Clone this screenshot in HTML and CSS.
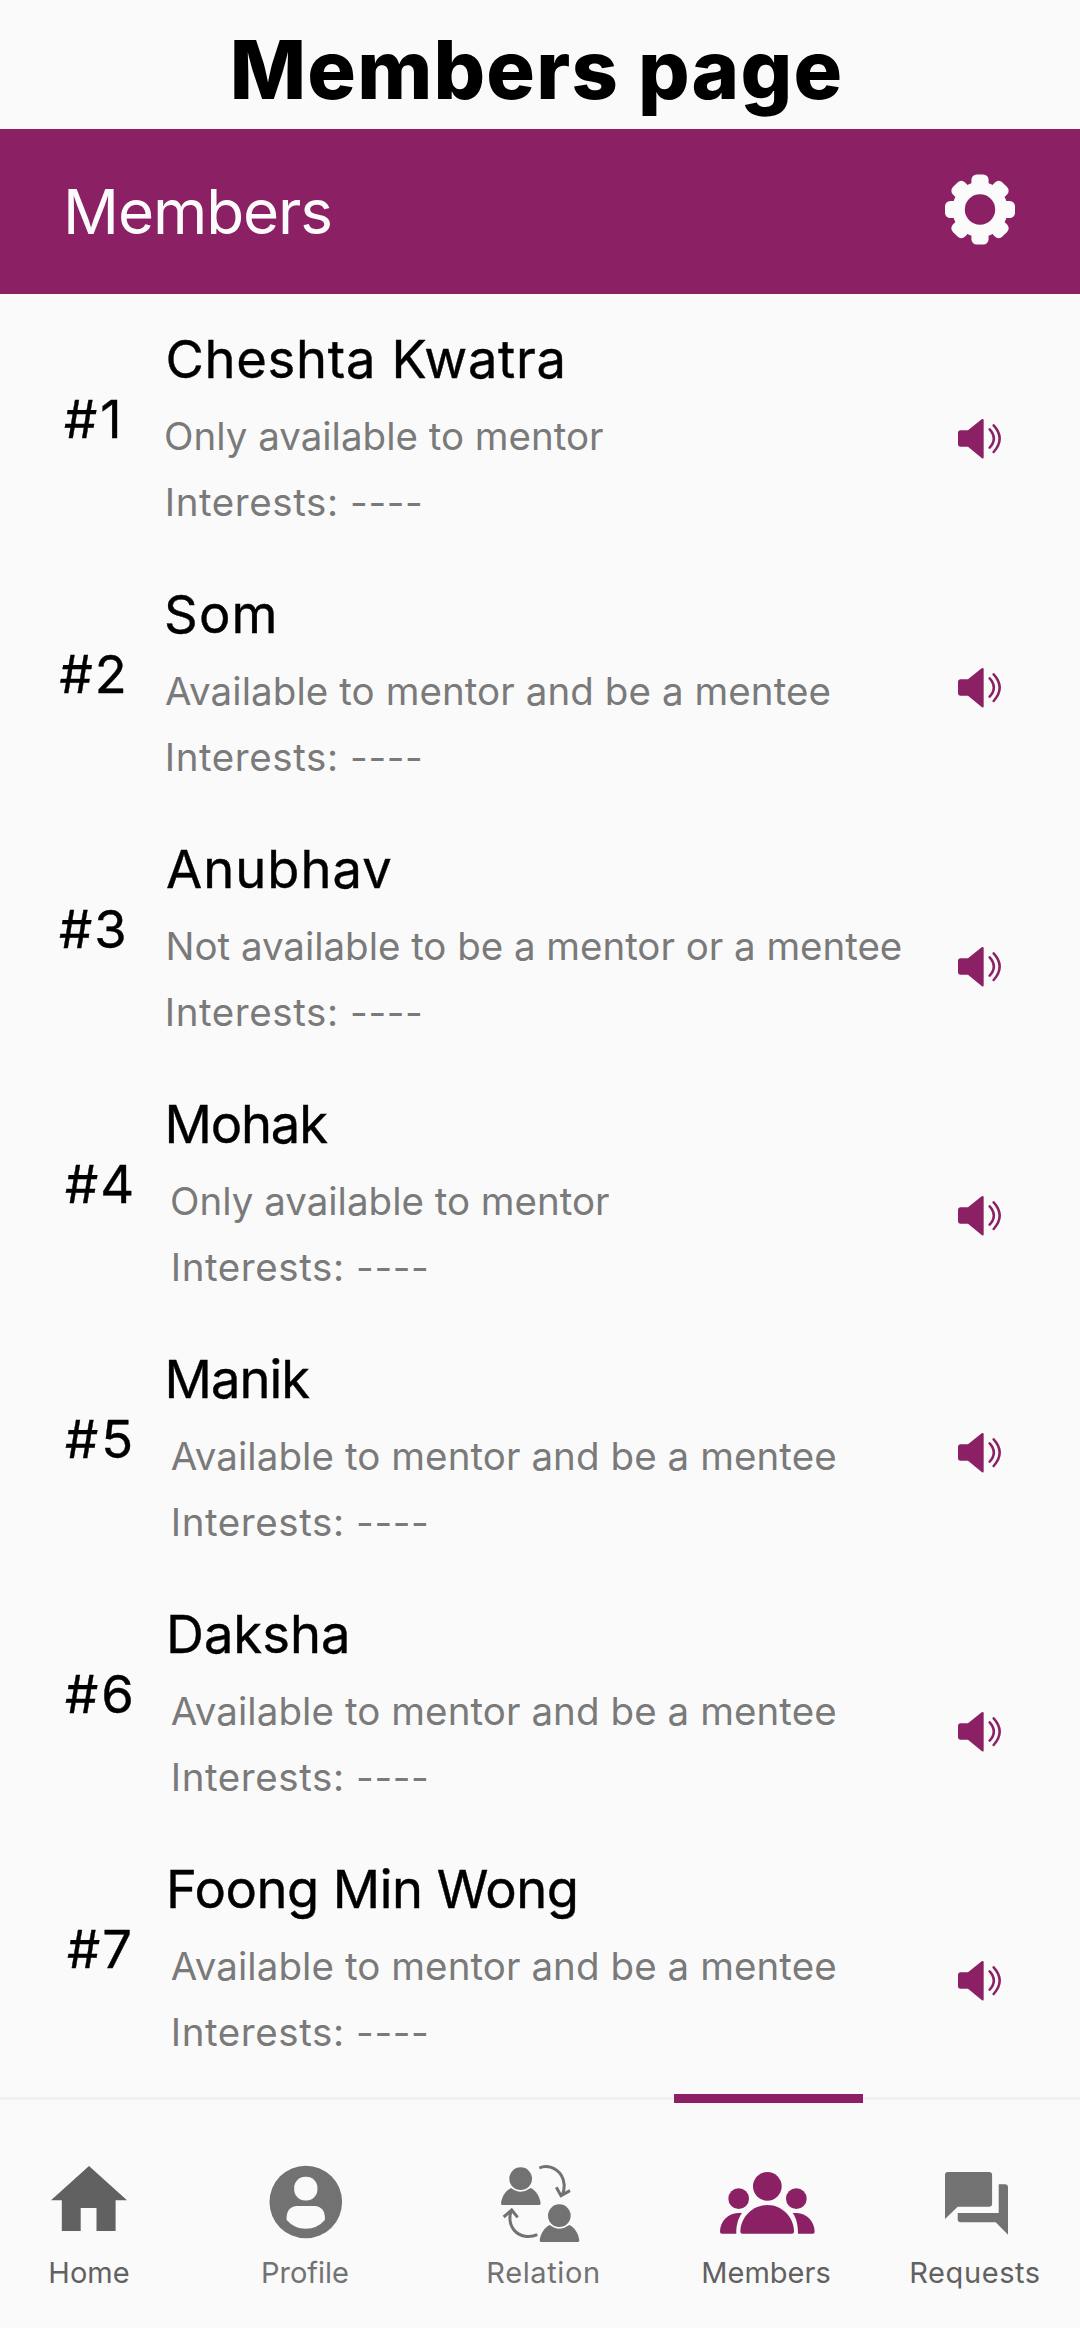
FILE: index.html
```html
<!DOCTYPE html>
<html lang="en">
<head>
<meta charset="utf-8">
<title>Members page</title>
<link rel="stylesheet" href="styles.css">
</head>
<body>
<svg class="defs" width="0" height="0" aria-hidden="true">
  <symbol id="speaker" viewBox="84 57 129 120">
    <path d="M92 91H114L155 58Q161 55 161 61V172Q161 178 155 174L114 140H92Q84 140 84 132V99Q84 91 92 91Z" fill="currentColor"/>
    <path d="M179 88Q204 115 179 143M191 76Q227 115 191 156" fill="none" stroke="currentColor" stroke-width="7.5" stroke-linecap="round"/>
  </symbol>
</svg>
<h1 class="title">Members page</h1>
<header class="bar">
  <h2 class="bar-title">Members</h2>
  <svg class="gear" viewBox="-106 -106 212 212">
    <g fill="#fbfbfb">
      <circle r="84"/>
      <rect x="-26" y="-106" width="52" height="212" rx="16"/>
      <rect x="-106" y="-26" width="212" height="52" rx="16"/>
      <rect x="-26" y="-106" width="52" height="212" rx="16" transform="rotate(45)"/>
      <rect x="-26" y="-106" width="52" height="212" rx="16" transform="rotate(-45)"/>
    </g>
    <circle r="46" fill="#8b2164"/>
  </svg>
</header>
<main class="list">
  <article class="member m1"><div class="rank">#1</div><div class="info"><h3 class="name">Cheshta Kwatra</h3><p class="status only">Only available to mentor</p><p class="interests">Interests: ----</p></div><svg class="speaker"><use href="#speaker"/></svg></article>
  <article class="member m2"><div class="rank">#2</div><div class="info"><h3 class="name">Som</h3><p class="status both">Available to mentor and be a mentee</p><p class="interests">Interests: ----</p></div><svg class="speaker"><use href="#speaker"/></svg></article>
  <article class="member m3"><div class="rank">#3</div><div class="info"><h3 class="name">Anubhav</h3><p class="status none">Not available to be a mentor or a mentee</p><p class="interests">Interests: ----</p></div><svg class="speaker"><use href="#speaker"/></svg></article>
  <article class="member m4 inset"><div class="rank">#4</div><div class="info"><h3 class="name">Mohak</h3><p class="status only">Only available to mentor</p><p class="interests">Interests: ----</p></div><svg class="speaker"><use href="#speaker"/></svg></article>
  <article class="member m5 inset"><div class="rank">#5</div><div class="info"><h3 class="name">Manik</h3><p class="status both">Available to mentor and be a mentee</p><p class="interests">Interests: ----</p></div><svg class="speaker"><use href="#speaker"/></svg></article>
  <article class="member m6 inset"><div class="rank">#6</div><div class="info"><h3 class="name">Daksha</h3><p class="status both">Available to mentor and be a mentee</p><p class="interests">Interests: ----</p></div><svg class="speaker"><use href="#speaker"/></svg></article>
  <article class="member m7 inset"><div class="rank">#7</div><div class="info"><h3 class="name">Foong Min Wong</h3><p class="status both">Available to mentor and be a mentee</p><p class="interests">Interests: ----</p></div><svg class="speaker"><use href="#speaker"/></svg></article>
</main>
<nav class="tabs">
  <a class="tab home">
    <svg viewBox="0 0 96 84"><path d="M48 6L86 40.3H74.6V71H55.5V48H39.7V71H20.8V40.3H10Z" fill="#616161"/></svg>
    <span>Home</span>
  </a>
  <a class="tab profile">
    <svg viewBox="0 0 96 84"><circle cx="48.8" cy="42" r="36.3" fill="#727272"/><rect x="37.2" y="16.7" width="23.2" height="23.8" rx="11" fill="#fafafa"/><path d="M39.6 46H57.9C63.8 46 67.9 51 67.9 57.5V60Q60.3 68.7 48.8 68.7Q37.3 68.7 29.6 60V57.5C29.6 51 33.7 46 39.6 46Z" fill="#fafafa"/></svg>
    <span>Profile</span>
  </a>
  <a class="tab relation">
    <svg viewBox="48 30 288 252">
      <g fill="#727272">
        <circle cx="122" cy="86" r="34"/>
        <path d="M63 160C66 138 78 122 93 114Q107 125 122 125Q137 125 152 114C168 122 179 138 182 160Q182 165 178 165H67Q63 165 63 160Z"/>
        <circle cx="238" cy="197" r="34"/>
        <path d="M179 271C182 249 194 233 209 225Q223 236 238 236Q253 236 268 225C284 233 295 249 298 271Q298 276 294 276H183Q179 276 179 271Z"/>
      </g>
      <g fill="none" stroke="#727272" stroke-width="9">
        <path d="M178 54C200 44 228 52 244 76C254 93 256 112 247 136M229 112L243 137L270 122"/>
        <path d="M172 254C150 264 120 262 102 240C88 222 86 204 94 181M71 201L95 180L113 202"/>
      </g>
    </svg>
    <span>Relation</span>
  </a>
  <a class="tab members active">
    <svg viewBox="54 30 288 252"><g fill="#8b2164">
      <circle cx="202" cy="109" r="43"/><circle cx="116" cy="146" r="31"/><circle cx="289" cy="146" r="31"/>
      <path d="M121 245C121 205 155 165 202 165C249 165 282 205 282 245Q282 251 276 251H127Q121 251 121 245Z"/>
      <path d="M60 245C60 215 85 189 114 189H126C114 205 108 228 109 251H66Q60 251 60 245Z"/>
      <path d="M344 245C344 215 319 189 290 189H278C290 205 294 228 294 251H338Q344 251 344 245Z"/>
    </g></svg>
    <span>Members</span>
  </a>
  <a class="tab requests">
    <svg viewBox="0 0 96 84"><path d="M21 12H62Q65.1 12 65.1 15V43.7Q65.1 46.7 62 46.7H30.7L18 59V15Q18 12 21 12ZM71.7 24.3H78Q81 24.3 81 27.3V74.7L68.7 62.3H33.7Q30.7 62.3 30.7 59.3V53H71.7Z" fill="#727272"/></svg>
    <span>Requests</span>
  </a>
</nav>
</body>
</html>
```
FILE: styles.css
```css
* { box-sizing: border-box; margin: 0; padding: 0; }
body {
  width: 1080px;
  height: 2328px;
  background: #fafafa;
  font-family: Inter, "Liberation Sans", sans-serif;
  font-weight: 400;
  color: #000;
}
.defs { position: absolute; }
svg { display: block; overflow: visible; }

.title {
  height: 129px;
  padding: 10px 7px 0 0;
  font-size: 81px;
  line-height: 120px;
  font-weight: 800;
  letter-spacing: 1.2px;
  text-align: center;
}

.bar {
  display: flex;
  justify-content: space-between;
  height: 165px;
  padding: 0 65px 0 63px;
  background: #8b2164;
}
.bar-title {
  font-size: 62px;
  line-height: 165px;
  font-weight: 400;
  letter-spacing: -1.1px;
  color: #fbfbfb;
}
.gear { width: 70px; height: 71px; margin-top: 45px; }

.list { height: 1803px; padding-top: 6px; }
.member {
  display: grid;
  grid-template-columns: 164px 1fr 122px;
  align-items: start;
  height: 255px;
}
.rank {
  margin-top: 86px;
  padding-left: 64px;
  font-size: 52.5px;
  line-height: 66px;
  letter-spacing: 2px;
  white-space: nowrap;
}
.info { padding-top: 26px; white-space: nowrap; }
.name {
  margin-bottom: 11px;
  font-size: 52.5px;
  line-height: 66px;
  font-weight: 400;
}
.rank, .name { -webkit-text-stroke: 0.4px #000; }
.status, .interests {
  font-size: 38.5px;
  line-height: 66px;
  color: #7a7a7a;
}
.both { padding-left: 1px; letter-spacing: 0.08px; }
.none { padding-left: 1.5px; letter-spacing: -0.03px; }
.interests { padding-left: 0.7px; letter-spacing: 0.6px; }
.inset .status { padding-left: 6.7px; }
.inset .only { padding-left: 6px; }
.inset .interests { padding-left: 6.7px; }
.speaker { width: 43px; height: 40px; color: #8b2164; }

.m1 .rank { letter-spacing: 3px; }
.m1 .name { padding-left: 1.5px; letter-spacing: 0.7px; }
.m1 .speaker { margin-top: 119px; }
.m2 .rank { padding-left: 59.5px; }
.m2 .name { letter-spacing: 1.2px; }
.m2 .speaker { margin-top: 113px; }
.m3 .rank { padding-left: 59px; }
.m3 .name { padding-left: 2px; letter-spacing: 1px; }
.m3 .speaker { margin-top: 137px; }
.m4 .rank { padding-left: 65px; }
.m4 .name { padding-left: 0.5px; letter-spacing: -1.2px; }
.m4 .speaker { margin-top: 131px; }
.m5 .rank { padding-left: 65px; letter-spacing: 3px; }
.m5 .name { padding-left: 0.5px; letter-spacing: -1px; }
.m5 .speaker { margin-top: 113px; }
.m6 .rank { padding-left: 65px; letter-spacing: 3px; }
.m6 .name { padding-left: 2px; }
.m6 .speaker { margin-top: 137px; }
.m7 .rank { padding-left: 67px; }
.m7 .name { padding-left: 2px; letter-spacing: -0.5px; }
.m7 .speaker { margin-top: 131px; }

.tabs {
  display: grid;
  grid-template-columns: 178px 254px 223px 222px 196px;
  height: 231px;
  border-top: 3px solid #f1f1f1;
}
.tab {
  position: relative;
  display: flex;
  flex-direction: column;
  align-items: center;
  gap: 11px;
  padding-top: 60px;
  font-size: 29px;
  line-height: 36px;
  color: #616161;
}
.tab svg { width: 96px; height: 84px; }
.profile, .relation { color: #727272; }
.relation, .requests { letter-spacing: 0.6px; }
.active::before {
  content: "";
  position: absolute;
  top: -6px;
  left: 18.5px;
  width: 189.5px;
  height: 9px;
  background: #8b2164;
}
```
